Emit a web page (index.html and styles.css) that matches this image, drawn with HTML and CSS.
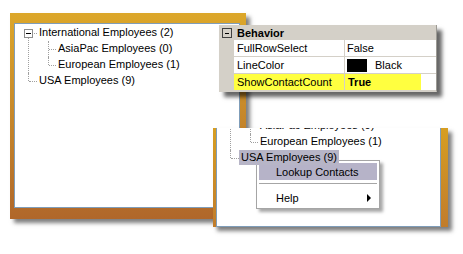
FILE: index.html
```html
<!DOCTYPE html>
<html>
<head>
<meta charset="utf-8">
<title>Tree view properties</title>
<link rel="stylesheet" href="styles.css">
</head>
<body>
  <div class="win win-tree">
    <div class="win-inner">
      <ul class="tree">
        <li class="open">
          <div class="row"><span class="toggle"></span><span class="label">International Employees (2)</span></div>
          <ul>
            <li><div class="row"><span class="label">AsiaPac Employees (0)</span></div></li>
            <li><div class="row"><span class="label">European Employees (1)</span></div></li>
          </ul>
        </li>
        <li><div class="row"><span class="label">USA Employees (9)</span></div></li>
      </ul>
    </div>
  </div>

  <div class="win win-menu">
    <div class="win-inner">
      <ul class="tree tree-scrolled">
        <li class="open">
          <div class="row"><span class="toggle"></span><span class="label">International Employees (2)</span></div>
          <ul>
            <li><div class="row"><span class="label">AsiaPac Employees (0)</span></div></li>
            <li><div class="row"><span class="label">European Employees (1)</span></div></li>
          </ul>
        </li>
        <li><div class="row"><span class="label selected">USA Employees (9)</span></div></li>
      </ul>
    </div>
    <div class="ctx-menu">
      <div class="ctx-item active">Lookup Contacts</div>
      <div class="ctx-sep"></div>
      <div class="ctx-item">Help<span class="ctx-arrow"></span></div>
    </div>
  </div>

  <div class="propgrid">
    <div class="pg-header"><span class="pg-toggle"></span>Behavior</div>
    <div class="pg-row">
      <div class="pg-margin"></div>
      <div class="pg-name">FullRowSelect</div>
      <div class="pg-value">False</div>
    </div>
    <div class="pg-row">
      <div class="pg-margin"></div>
      <div class="pg-name">LineColor</div>
      <div class="pg-value"><span class="swatch"></span>Black</div>
    </div>
    <div class="pg-row">
      <div class="pg-margin"></div>
      <div class="pg-name marked">ShowContactCount</div>
      <div class="pg-value"><span class="mark-value">True</span></div>
    </div>
  </div>
</body>
</html>
```

FILE: styles.css
```css
* { box-sizing: border-box; }

html, body {
  margin: 0;
  padding: 0;
  background: #fff;
}

body {
  width: 463px;
  height: 254px;
  overflow: hidden;
  position: relative;
  font-family: "Liberation Sans", Arial, sans-serif;
  font-size: 11px;
  color: #000;
}

/* ---------- framed windows (free canvas) ---------- */
.win {
  position: absolute;
}

.win-tree {
  left: 10px;
  top: 13px;
  width: 236px;
  height: 206px;
  padding: 10px 6px 11px 4px;
  background: linear-gradient(#dca72a, #b0672a);
  box-shadow: 4px 4px 4px rgba(0, 0, 0, 0.5);
}

.win-tree .win-inner {
  height: 100%;
  background: #fff;
  border: 1px solid #7f9db9;
  overflow: hidden;
}

.win-menu {
  left: 213px;
  top: 128px;
  width: 235px;
  height: 99px;
  padding: 0 7px 0 3px;
  background: linear-gradient(#d79e22, #c07c2c);
  box-shadow: 4px 4px 4px rgba(0, 0, 0, 0.5);
}

.win-menu .win-inner {
  height: 100%;
  background: #fff;
  border: 1px solid #7f9db9;
  border-top: none;
  overflow: hidden;
}

/* ---------- tree view ---------- */
.tree, .tree ul {
  list-style: none;
  margin: 0;
  padding: 0;
}

.tree {
  padding-top: 1px;
}

.tree-scrolled {
  margin-top: -27px;
}

.tree li {
  position: relative;
}

.tree li::before {
  content: "";
  position: absolute;
  left: 13px;
  top: 0;
  bottom: 0;
  border-left: 1px dotted #a0a0a0;
}

.tree > li:first-child::before {
  top: 8px;
}

.tree li:last-child::before {
  bottom: auto;
  height: 8px;
}

.tree ul li::before {
  left: 33px;
}

.row {
  position: relative;
  height: 16px;
  display: flex;
  align-items: flex-start;
  padding-left: 22px;
}

.tree ul .row {
  padding-left: 41px;
}

.row::after {
  content: "";
  position: absolute;
  left: 14px;
  top: 8px;
  width: 8px;
  border-top: 1px dotted #a0a0a0;
}

.tree ul .row::after {
  left: 34px;
  width: 7px;
}

.label {
  position: relative;
  z-index: 1;
  height: 15px;
  line-height: 15px;
  padding: 0 2px;
  white-space: nowrap;
}

.label.selected {
  background: #b7b5c7;
}

.toggle {
  position: absolute;
  z-index: 2;
  left: 9px;
  top: 4px;
  width: 9px;
  height: 9px;
  border: 1px solid #8d8d8d;
  background: #fff;
}

.toggle::after {
  content: "";
  position: absolute;
  left: 1px;
  top: 3px;
  width: 5px;
  height: 1px;
  background: #000;
}

/* ---------- context menu ---------- */
.ctx-menu {
  position: absolute;
  left: 43px;
  top: 32px;
  width: 124px;
  height: 49px;
  padding: 2px;
  background: #fff;
  border: 1px solid #a5a5a5;
  box-shadow: 3px 3px 3px rgba(0, 0, 0, 0.35);
}

.ctx-item {
  height: 17px;
  display: flex;
  align-items: center;
  padding-left: 17px;
  white-space: nowrap;
}

.ctx-item.active {
  background: #b6b3c8;
}

.ctx-sep {
  height: 9px;
  padding-top: 3px;
}

.ctx-sep::before {
  content: "";
  display: block;
  height: 1px;
  background: #a6a6a6;
}

.ctx-arrow {
  margin-left: auto;
  margin-right: 6px;
  width: 0;
  height: 0;
  border-left: 4px solid #000;
  border-top: 4px solid transparent;
  border-bottom: 4px solid transparent;
}

/* ---------- property grid ---------- */
.propgrid {
  position: absolute;
  left: 219px;
  top: 25px;
  width: 218px;
  background: #d4d0c8;
  border-right: 1px solid #9c9a94;
  border-bottom: 1px solid #d4d0c8;
  box-shadow: 5px 5px 4px rgba(0, 0, 0, 0.6);
}

.pg-header {
  height: 15px;
  display: flex;
  align-items: center;
  font-weight: bold;
  padding-left: 3px;
}

.pg-toggle {
  position: relative;
  width: 10px;
  height: 10px;
  border: 1px solid #404040;
  margin-right: 5px;
}

.pg-toggle::after {
  content: "";
  position: absolute;
  left: 2px;
  top: 4px;
  width: 4px;
  height: 1px;
  background: #000;
}

.pg-row {
  display: grid;
  grid-template-columns: 15px 111px 1fr;
  height: 17px;
}

.pg-name, .pg-value {
  background: #fff;
  border-bottom: 1px solid #d4d0c8;
  display: flex;
  align-items: center;
  white-space: nowrap;
}

.pg-name {
  padding-left: 3px;
  border-right: 1px solid #d4d0c8;
}

.pg-value {
  padding-left: 2px;
}

.pg-name.marked {
  background: #ffff40;
}

.mark-value {
  display: flex;
  align-items: center;
  align-self: stretch;
  width: 76px;
  margin-left: -2px;
  padding-left: 3px;
  background: #ffff40;
  font-weight: bold;
}

.swatch {
  width: 20px;
  height: 13px;
  background: #000;
  margin-right: 8px;
}
```
